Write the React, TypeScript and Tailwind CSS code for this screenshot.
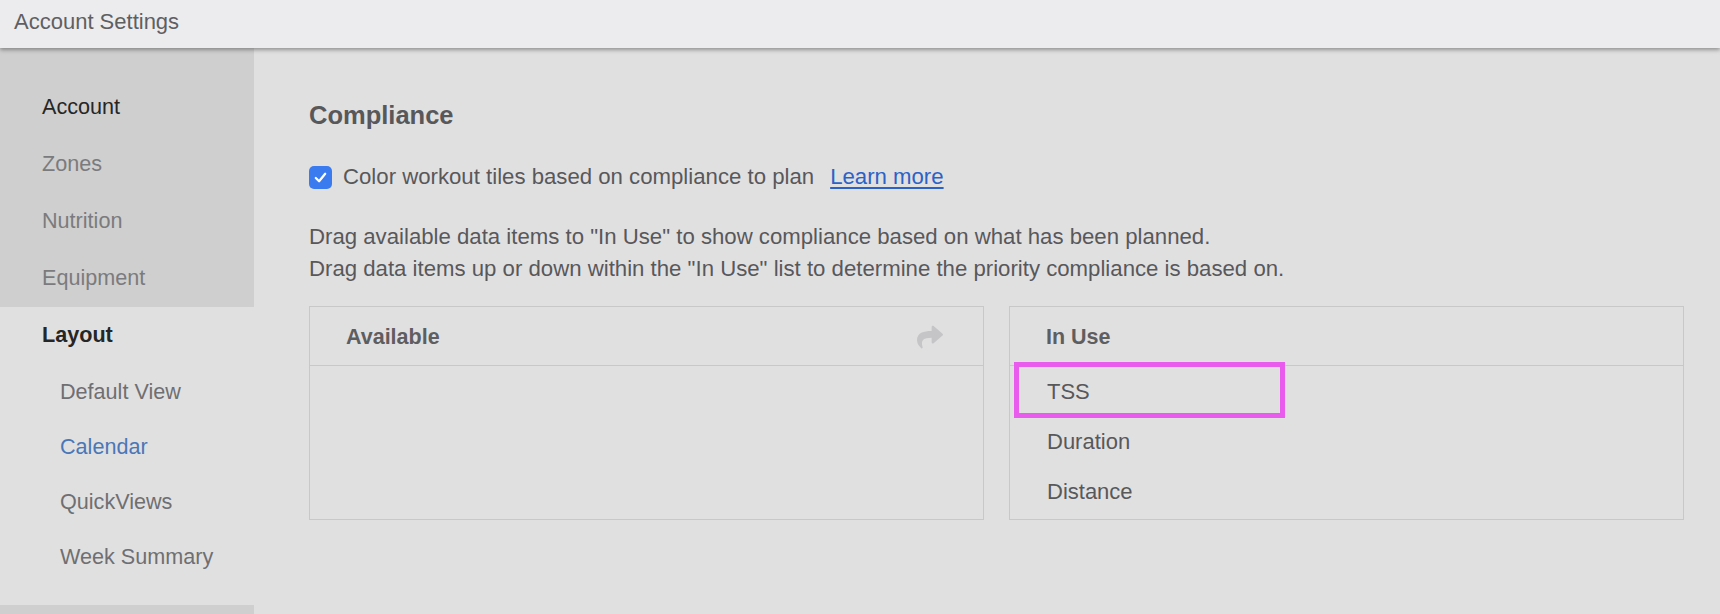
import { FaShare } from 'react-icons/fa';

const topNav = [
    { label: 'Account', active: true },
    { label: 'Zones' },
    { label: 'Nutrition' },
    { label: 'Equipment' },
];

const layoutNav = [
    { label: 'Default View' },
    { label: 'Calendar', selected: true },
    { label: 'QuickViews' },
    { label: 'Week Summary' },
];

const inUse = ['TSS', 'Duration', 'Distance'];

function CheckBox() {
    return (
        <div className="w-[23px] h-[23px] rounded-[5px] bg-[#3a7bf0] flex items-center justify-center shrink-0">
            <svg width="15" height="15" viewBox="0 0 16 16" fill="none">
                <path d="M3 8.5 L6.5 12 L13 4" stroke="#ffffff" strokeWidth="2.4" strokeLinecap="round" strokeLinejoin="round" />
            </svg>
        </div>
    );
}

export default function App() {
    return (
        <div className="w-full h-[614px] overflow-hidden flex flex-col bg-[#e1e0e1] font-['Liberation_Sans',Arial,sans-serif]">
            {/* top bar */}
            <div className="h-[48px] shrink-0 bg-[#ececee] flex items-center px-[14px] relative z-10 shadow-[0_2px_4px_rgba(0,0,0,0.35)]">
                <span className="text-[22px] text-[#5f5f62] leading-none -mt-[4px]">Account Settings</span>
            </div>

            <div className="flex flex-1 min-h-0">
                {/* sidebar */}
                <aside className="w-[254px] shrink-0 flex flex-col bg-[#cfcfcf]">
                    <div className="h-[259px] pt-[31px] bg-[#cfcfcf]">
                        {topNav.map(item => (
                            <div
                                key={item.label}
                                className={`h-[57px] flex items-center pl-[42px] text-[21.6px] ${item.active ? 'text-[#262626]' : 'text-[#7b7b7e]'}`}
                            >
                                {item.label}
                            </div>
                        ))}
                    </div>
                    <div className="h-[298px] bg-[#e1e0e1]">
                        <div className="h-[56px] flex items-center pl-[42px] text-[21.6px] font-bold text-[#262626]">Layout</div>
                        <div className="pt-[2px]">
                            {layoutNav.map(item => (
                                <div
                                    key={item.label}
                                    className={`h-[55px] flex items-center pl-[60px] text-[21.6px] ${item.selected ? 'text-[#4a77b6]' : 'text-[#6f6f72]'}`}
                                >
                                    {item.label}
                                </div>
                            ))}
                        </div>
                    </div>
                    <div className="flex-1 bg-[#cfcfcf]" />
                </aside>

                {/* content */}
                <main className="flex-1 pl-[55px] pr-[36px] pt-[52px] text-[#58585b]">
                    <h1 className="h-[30px] leading-[30px] text-[25.5px] font-bold">Compliance</h1>

                    <div className="mt-[32px] h-[30px] flex items-center">
                        <CheckBox />
                        <span className="ml-[11px] text-[22.2px]">Color workout tiles based on compliance to plan</span>
                        <a href="#" className="ml-[16px] text-[22.2px] text-[#2c62c6] underline underline-offset-[3px]">Learn more</a>
                    </div>

                    <div className="mt-[29px] text-[22.2px] leading-[32px]">
                        <p>Drag available data items to "In Use" to show compliance based on what has been planned.</p>
                        <p>Drag data items up or down within the "In Use" list to determine the priority compliance is based on.</p>
                    </div>

                    <div className="mt-[21px] grid grid-cols-2 gap-[25px]">
                        <section className="h-[214px] border border-[#c9c8c9]">
                            <div className="h-[59px] pt-[2px] border-b border-[#c9c8c9] flex items-center justify-between pl-[36px] pr-[38px]">
                                <span className="text-[21.5px] font-bold text-[#5e5e61]">Available</span>
                                <FaShare className="w-[30px] h-[26px] text-[#c5c5c7]" />
                            </div>
                        </section>

                        <section className="h-[214px] border border-[#c9c8c9] relative">
                            <div className="h-[59px] pt-[2px] border-b border-[#c9c8c9] flex items-center pl-[36px]">
                                <span className="text-[21.5px] font-bold text-[#5e5e61]">In Use</span>
                            </div>
                            {inUse.map(item => (
                                <div key={item} className="h-[50px] flex items-center pl-[37px] text-[22px] text-[#58585b]">
                                    {item}
                                </div>
                            ))}
                            {/* highlight annotation */}
                            <div className="absolute left-[4px] top-[55px] w-[271px] h-[56px] border-[5px] border-[#e95bec]" />
                        </section>
                    </div>
                </main>
            </div>
        </div>
    );
}
